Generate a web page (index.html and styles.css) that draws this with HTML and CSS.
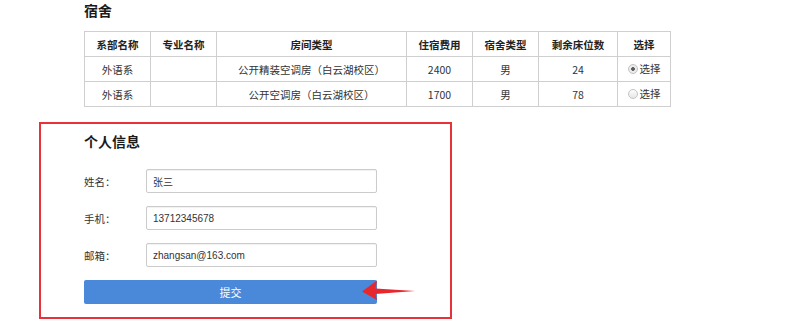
FILE: index.html
```html
<!DOCTYPE html>
<html lang="zh-CN">
<head>
    <meta charset="UTF-8">
    <title>宿舍选择</title>
    <link rel="stylesheet" href="styles.css">
</head>
<body>
    <div class="page">
        <h2 class="section-title">宿舍</h2>

        <!-- 宿舍列表 -->
        <table class="dorm-table">
            <thead>
                <tr>
                    <th class="col-dept">系部名称</th>
                    <th class="col-major">专业名称</th>
                    <th class="col-room">房间类型</th>
                    <th class="col-fee">住宿费用</th>
                    <th class="col-type">宿舍类型</th>
                    <th class="col-beds">剩余床位数</th>
                    <th class="col-pick">选择</th>
                </tr>
            </thead>
            <tbody>
                <tr>
                    <td>外语系</td>
                    <td></td>
                    <td>公开精装空调房（白云湖校区）</td>
                    <td>2400</td>
                    <td>男</td>
                    <td>24</td>
                    <td><label class="pick"><input type="radio" name="room" checked> 选择</label></td>
                </tr>
                <tr>
                    <td>外语系</td>
                    <td></td>
                    <td>公开空调房（白云湖校区）</td>
                    <td>1700</td>
                    <td>男</td>
                    <td>78</td>
                    <td><label class="pick"><input type="radio" name="room"> 选择</label></td>
                </tr>
            </tbody>
        </table>

        <!-- 个人信息 -->
        <div class="mark-box">
            <form class="info-form" onsubmit="return false">
                <h2 class="section-title">个人信息</h2>
                <div class="form-row">
                    <label class="form-label">姓名：</label>
                    <input class="input-field" type="text" value="张三">
                </div>
                <div class="form-row">
                    <label class="form-label">手机：</label>
                    <input class="input-field" type="text" value="13712345678">
                </div>
                <div class="form-row">
                    <label class="form-label">邮箱：</label>
                    <input class="input-field" type="text" value="zhangsan@163.com">
                </div>
                <div class="submit-row">
                    <button class="btn" type="submit">提交</button>
                    <svg class="arrow" width="54" height="21" viewBox="0 0 54 21">
                        <path d="M0 11.5 L15 0.5 L13.5 8.5 L53 11 L13.5 14 L15 20 Z" fill="#e8272d"/>
                    </svg>
                </div>
            </form>
        </div>
    </div>
</body>
</html>
```

FILE: styles.css
```css
body {
    margin: 0;
    background: #fff;
    font-family: "Microsoft YaHei", "Noto Sans CJK SC", sans-serif;
    color: #333;
}
.page {
    padding: 0 0 0 39px;
}
.section-title {
    margin: 0;
    font-size: 14px;
    line-height: 20px;
    font-weight: bold;
    color: #1a1a1a;
}
.page > .section-title {
    margin: 0 0 11px 45px;
}
.dorm-table {
    margin-left: 45px;
    border-collapse: collapse;
    table-layout: fixed;
    font-size: 10.5px;
}
.dorm-table th,
.dorm-table td {
    border: 1px solid #cfcfcf;
    height: 24px;
    padding: 0;
    text-align: center;
    color: #333;
}
.dorm-table th {
    font-weight: bold;
    color: #222;
}
.col-dept, .col-major, .col-fee, .col-type { width: 65px; }
.col-room { width: 189px; }
.col-beds { width: 78px; }
.col-pick { width: 52px; }
.pick {
    display: inline-flex;
    align-items: center;
    gap: 2px;
}
.pick input {
    appearance: none;
    margin: 0;
    width: 10px;
    height: 10px;
    border: 1px solid #c4c4c4;
    border-radius: 50%;
    background: linear-gradient(#fdfdfd, #e6e6e6);
    box-sizing: border-box;
}
.pick input:checked {
    background: radial-gradient(circle, #555 0, #666 1.6px, #eee 2.2px, #e6e6e6 100%);
}
.mark-box {
    margin-top: 15px;
    width: 413px;
    box-sizing: border-box;
    border: 2px solid #e63238;
    padding: 7px 0 13px 43px;
}
.info-form .section-title {
    margin-bottom: 18px;
}
.form-row {
    display: flex;
    align-items: center;
    margin-bottom: 13px;
}
.form-label {
    width: 62px;
    font-size: 10.5px;
    color: #333;
}
.input-field {
    width: 231px;
    height: 24px;
    box-sizing: border-box;
    margin: 0;
    padding: 0 6px;
    border: 1px solid #cbcbcb;
    border-radius: 2px;
    box-shadow: inset 0 1px 1px rgba(0,0,0,0.06);
    font-family: "Liberation Sans", Arial, sans-serif;
    font-size: 10px;
    color: #333;
}
.submit-row {
    position: relative;
    height: 24px;
}
.btn {
    display: block;
    width: 293px;
    height: 24px;
    margin: 0;
    padding: 0;
    border: none;
    border-radius: 2px;
    background: #4a88da;
    color: #fff;
    font-family: "Microsoft YaHei", "Noto Sans CJK SC", sans-serif;
    font-size: 11px;
    cursor: pointer;
}
.arrow {
    position: absolute;
    left: 278px;
    top: 0;
}
```
